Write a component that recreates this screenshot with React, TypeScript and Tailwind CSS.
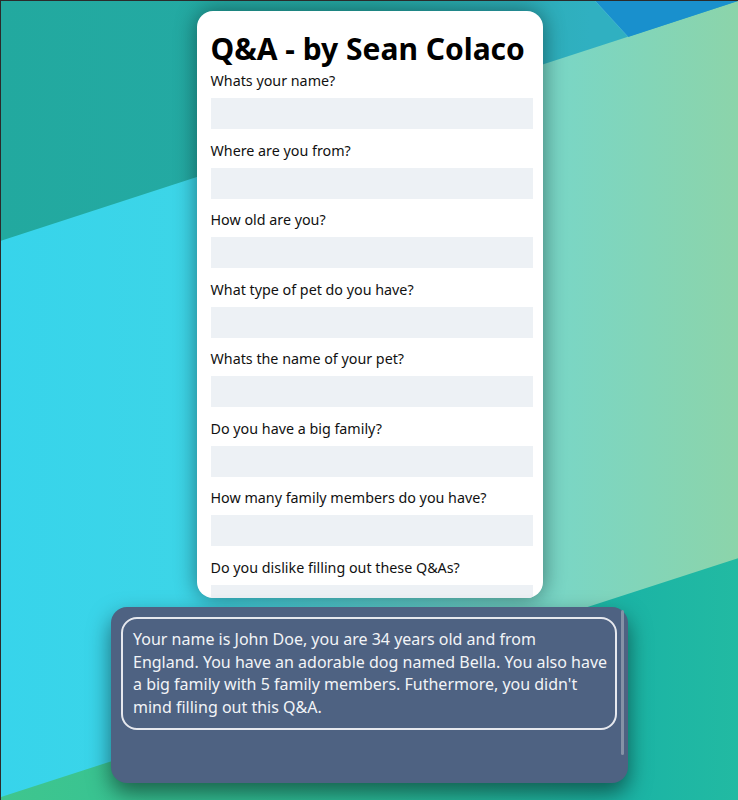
import React from 'react';

const questions = [
  'Whats your name?',
  'Where are you from?',
  'How old are you?',
  'What type of pet do you have?',
  'Whats the name of your pet?',
  'Do you have a big family?',
  'How many family members do you have?',
  'Do you dislike filling out these Q&As?',
];

// kept as separate lines so the wrap matches the original
const summary = [
  'Your name is John Doe, you are 34 years old and from',
  'England. You have an adorable dog named Bella. You also have',
  "a big family with 5 family members. Futhermore, you didn't",
  'mind filling out this Q&A.',
];

function Backdrop() {
  return (
    <svg className="absolute inset-0 h-full w-full" viewBox="0 0 738 800" preserveAspectRatio="none">
      <defs>
        <linearGradient id="mid" x1="0" y1="0" x2="738" y2="0" gradientUnits="userSpaceOnUse">
          <stop offset="0" stopColor="#37d4eb" />
          <stop offset="0.27" stopColor="#3dd5e7" />
          <stop offset="0.76" stopColor="#7ad6c5" />
          <stop offset="1" stopColor="#8cd4aa" />
        </linearGradient>
        <linearGradient id="top" x1="0" y1="0" x2="738" y2="0" gradientUnits="userSpaceOnUse">
          <stop offset="0" stopColor="#22a99f" />
          <stop offset="0.5" stopColor="#25aaa6" />
          <stop offset="0.8" stopColor="#30b0c1" />
        </linearGradient>
        <linearGradient id="bot" x1="0" y1="0" x2="738" y2="0" gradientUnits="userSpaceOnUse">
          <stop offset="0" stopColor="#3fc68e" />
          <stop offset="0.5" stopColor="#2bbd9a" />
          <stop offset="0.85" stopColor="#1bb4a5" />
          <stop offset="1" stopColor="#22baa2" />
        </linearGradient>
      </defs>
      <rect x="0" y="0" width="738" height="800" fill="url(#mid)" />
      <polygon points="0,0 738,0 0,240" fill="url(#top)" />
      <polygon points="595,0 738,0 628,36" fill="#1990cd" />
      <line x1="595" y1="0" x2="628" y2="36" stroke="#5cc3d6" strokeOpacity="0.5" strokeWidth="1" />
      <polygon points="0,797 738,558 738,800 0,800" fill="url(#bot)" />
    </svg>
  );
}

export default function App() {
  return (
    <div className="relative h-screen overflow-hidden border-l border-t border-[#2b2b2b] font-['Noto_Sans',sans-serif]">
      <Backdrop />
      <div className="relative flex flex-col items-center pt-[10px]">
        <div className="h-[587px] w-[346px] overflow-hidden rounded-[16px] bg-white pl-[14px] pr-[10px] pt-[20px] shadow-[0_0_22px_rgba(0,0,0,0.45)]">
          <h1 className="mb-[4px] text-[30px] font-bold leading-9 text-black">Q&amp;A - by Sean Colaco</h1>
          {questions.map((q) => (
            <div key={q}>
              <label className="block text-[14.3px] leading-5 text-[#111]">{q}</label>
              <div className="mb-[11.5px] mt-[7px] h-[31px] bg-[#edf1f5]" />
            </div>
          ))}
        </div>
        <div className="mt-[9px] flex h-[176px] w-[517px] rounded-[16px] bg-[#4e6282] py-[10px] pl-[10px] shadow-[0_10px_22px_rgba(0,0,0,0.5)]">
          <div className="h-[113px] min-w-0 flex-1 rounded-[16px] border-2 border-[#e6e8ee] px-[10px] py-[9px] text-[16px] leading-[22.6px] text-[#f2f4f7]">
            {summary.map((l) => (
              <div key={l} className="whitespace-nowrap">{l}</div>
            ))}
          </div>
          <div className="ml-[4px] mr-[4px] mt-[-7px] h-[145px] w-[3px] shrink-0 rounded-full bg-[#8592a6]" />
        </div>
      </div>
    </div>
  );
}
